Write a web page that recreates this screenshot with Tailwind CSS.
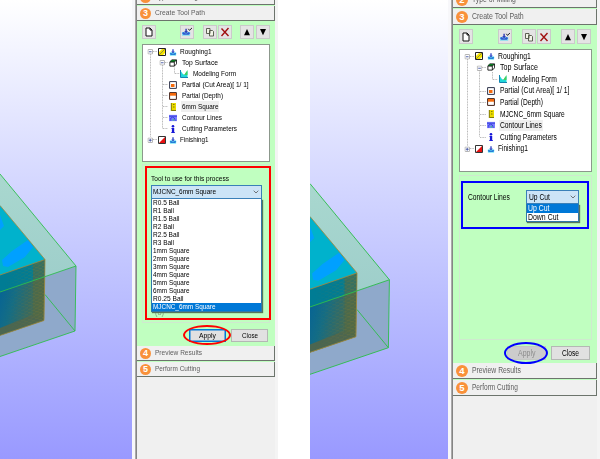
<!DOCTYPE html>
<html lang="en">
<head>
<meta charset="utf-8">
<title>Create Tool Path</title>
<script src="https://cdn.jsdelivr.net/npm/@tailwindcss/browser@4"></script>
</head>
<body class="w-[600px] h-[459px] overflow-hidden bg-white text-black font-['Liberation_Sans',Arial,sans-serif] text-[8px] leading-none [&_[data-w]]:inline-block [&_[data-w]]:shrink-0 [&_[data-w]]:whitespace-pre [&_[data-w]]:origin-left">

<!-- shared icons -->
<svg width="0" height="0" class="absolute">
  <defs>
    <linearGradient id="side" x1="0" y1="0" x2="1" y2="0.5"><stop offset="0" stop-color="#005f9c"/><stop offset="0.45" stop-color="#146d85"/><stop offset="1" stop-color="#4f6848"/></linearGradient>
    <linearGradient id="glass" x1="0" y1="0" x2="0" y2="1"><stop offset="0" stop-color="#a9d8cf"/><stop offset="1" stop-color="#9dcdca"/></linearGradient>
    <pattern id="grain" width="7" height="3.4" patternUnits="userSpaceOnUse" patternTransform="skewY(-8)"><path d="M0 .7h4M3.500 2.400h3.500" stroke="#8a7a2c" stroke-width=".6" opacity=".7"/></pattern>
    <linearGradient id="fade"><stop offset=".1" stop-color="#000"/><stop offset="1" stop-color="#fff"/></linearGradient>
    <mask id="m" maskUnits="userSpaceOnUse" x="0" y="255" width="46" height="85"><rect x="0" y="255" width="46" height="85" fill="url(#fade)"/></mask>
    <g id="model">
      <path d="M0 174 76 266 0 292z" fill="url(#glass)"/>
      <path d="M0 292 76 266 75 331 0 356.500z" fill="#8fa9cb"/>
      <path d="M0 205.500 45 259.500 0 275z" fill="#00b2cc"/>
      <path d="M0 215 4 226 0 230zM2 260 12 251 28 240 33 247 25 257 8 267 3 266z" fill="#00a0ff"/>
      <path d="M0 275 45 259.500 44 320.500 0 335.500z" fill="url(#side)"/>
      <path d="M0 275 45 259.500V277L0 292z" fill="#007c94"/>
      <path d="M0 328 30 316 44 312V320.500L0 335.500z" fill="#4b6650"/>
      <path d="M33 264 45 259.500 44 320.500 33 317z" fill="#526a45" opacity=".65"/>
      <path d="M0 275 45 259.500 44 320.500 0 333z" fill="url(#grain)" mask="url(#m)"/>
      <path d="M0 205.500 45 259.500 0 275M45 259.500 44 320.500 0 335.500" fill="none" stroke="#a28a3d" stroke-width=".8"/>
      <path d="M0 174 76 266 0 292M76 266 75 331 0 356.500M45 294.500 75 331" fill="none" stroke="#2fbd4d" stroke-width=".9"/>
    </g>
    <symbol id="anchor" viewBox="0 0 9 9"><path d="M1 5h7v3.500H1z" fill="#4fdcf0"/><path d="M3.700 1.500h1.600v2.500h1.200L4.500 6.500 2.500 4h1.200z" fill="#3a50c8"/><path d="M.8 6 2.500 5.500l2 1.500 2-1.500L8.200 6 7 7.800H2z" fill="#2878d8"/></symbol>
    <symbol id="rough" viewBox="0 0 8 8"><path d="M.5.500h7v7h-7z" fill="#fff" stroke="#222"/><path d="M1 7V4l3-3h3L7 5 5 7z" fill="#f5e400"/><path d="M1 7 7 1" stroke="#775" stroke-width=".8"/></symbol>
    <symbol id="finish" viewBox="0 0 8 8"><path d="M.5.500h7v7h-7z" fill="#fff" stroke="#333"/><path d="M7 1v6H1z" fill="#e81010"/></symbol>
    <symbol id="cube" viewBox="0 0 9 8"><path d="M3 .500h5.500V5L6 7.500H1V3z" fill="#fff" stroke="#111"/><path d="M1 3 3 .500h5.500L6 3z" fill="#087a20"/><path d="M1 3h5v4.500M6 3 8.500.500" fill="none" stroke="#111"/></symbol>
    <symbol id="form" viewBox="0 0 8 8"><path d="M0 0 3 4 4.500 5 7.500 1V7.500H1z" fill="#20d8d8"/><path d="M4 5 7.500 0V5z" fill="#40d060"/><path d="M2.500 3.500 5 1v3z" fill="#fff"/><path d="M.5 0v7.500H8" stroke="#1585b0" fill="none"/></symbol>
    <symbol id="area" viewBox="0 0 8 8"><path d="M.6.600h6.800v6.800H.6z" fill="#fff" stroke="#30344c"/><path d="M2 3h3.500v3H2z" fill="#f56a0c"/></symbol>
    <symbol id="depth" viewBox="0 0 8 8"><path d="M.6.600h6.800v6.800H.6z" fill="#fff" stroke="#442218"/><path d="M1 1h6v2.700H1z" fill="#f56a0c"/></symbol>
    <symbol id="tool" viewBox="0 0 8 8"><path d="M2 0h5v8H2z" fill="#eadb00"/><path d="M2.300 0v8M4 1.500h1.500M4 4h1.500M3 7.500h4" stroke="#66610a" stroke-width=".8"/></symbol>
    <symbol id="contour" viewBox="0 0 9 8"><path d="M0 .500h9v7H0z" fill="#7a7cff"/><path d="M2 7V4l2-1 2 1 1 3M0 2h9" stroke="#333cd8" fill="none"/><path d="M4 5h2v2H4z" fill="#48b4a0"/></symbol>
    <symbol id="info" viewBox="0 0 8 8"><circle cx="4" cy="1.300" r="1.300" fill="#1717d8"/><path d="M2.500 3h2.700v4h.6v1H2.300V7h.6V4h-.4z" fill="#1717d8"/></symbol>
    <symbol id="page" viewBox="0 0 10 10"><path d="M2 1h4l2 2v6H2zM6 1v2h2" fill="#fff" stroke="#111"/></symbol>
    <symbol id="load" viewBox="0 0 11 10"><path d="M0 5h9v4H0z" fill="#72def2"/><path d="M3.700 1.500h1.600v2.500h1.200L4.500 7 2.500 4h1.200z" fill="#3340b8"/><path d="M0 6 2 5l2.500 2L7 5l2 1-1.500 2h-6z" fill="#3558d0"/><path d="m7 1.500 1.300 1.700L11 .500" stroke="#111" fill="none"/></symbol>
    <symbol id="copy" viewBox="0 0 10 10"><path d="M1.500 1.500h3.500v5H1.500zM4.500 3.500h3l1 1v4.500h-4z" fill="#f2f5e8" stroke="#4e5244" stroke-width=".9"/></symbol>
    <symbol id="cross" viewBox="0 0 10 10"><path d="m1.500 1.500 7 7.500M8.500 1 1.500 9" stroke="#a01010" stroke-width="1.400"/></symbol>
    <symbol id="up" viewBox="0 0 10 10"><path d="M5 2 8 8.300H2z"/></symbol>
    <symbol id="down" viewBox="0 0 10 10"><path d="M5 8.300 8 2H2z"/></symbol>
    <symbol id="minus" viewBox="0 0 5 5"><rect x=".4" y=".4" width="4.200" height="4.200" rx=".6" fill="#fff" stroke="#a5a5a5" stroke-width=".8"/><path d="M1.300 2.500h2.400" stroke="#3c50a0" stroke-width=".8"/></symbol>
    <symbol id="plus" viewBox="0 0 5 5"><rect x=".4" y=".4" width="4.200" height="4.200" rx=".6" fill="#fff" stroke="#a5a5a5" stroke-width=".8"/><path d="M1.200 2.500h2.600M2.500 1.200v2.600" stroke="#3c50a0" stroke-width=".8"/></symbol>
  </defs>
</svg>

<div class="flex h-[459px]">

  <!-- left window -->
  <div class="w-[132px] shrink-0 bg-linear-to-b from-white to-[#9999ff]">
    <svg width="132" height="459" viewBox="0 0 132 459" class="block"><use href="#model"/></svg>
  </div>
  <div class="w-[4px] shrink-0 bg-[#f7f7fa] border-r border-[#aaaaaa]"></div>
  <div class="w-[1px] shrink-0 bg-[#858585]"></div>
  <div data-size="8" class="w-[138px] shrink-0 flex flex-col bg-[#f0f0f0]">
    <div class="bg-[#c0ffc0] h-[377px] shrink-0 flex flex-col [&>header]:h-[15px] [&>header]:shrink-0 [&>header]:flex [&>header]:items-center [&>header]:gap-[4px] [&>header]:pl-[3px] [&>header]:bg-[#f0f0f0] [&>header]:border-b [&>header]:border-r [&>header]:border-[#6c746c] [&>header]:text-[#5e5e5e]">
      <header class="-mt-[10px]"><div class="size-[11px] shrink-0 grid place-items-center rounded-full bg-[#f9913a] text-white font-bold text-[9px]">2</div><span data-w="43">Type of Milling</span></header>
      <header class="mt-[1px]"><div class="size-[11px] shrink-0 grid place-items-center rounded-full bg-[#f9913a] text-white font-bold text-[9px]">3</div><span data-w="50">Create Tool Path</span></header>

      <div class="flex pt-[4px] pl-[5px] h-[23px] shrink-0 [&>button]:w-[14px] [&>button]:h-[14px] [&>button]:shrink-0 [&>button]:bg-[#e4e4e4] [&>button]:border [&>button]:border-[#cacaca] [&>button]:grid [&>button]:place-items-center [&_svg]:size-[10px]">
        <button><svg><use href="#page"/></svg></button>
        <button class="ml-[24px]"><svg><use href="#load"/></svg></button>
        <button class="ml-[9px]"><svg><use href="#copy"/></svg></button>
        <button class="ml-[1px]"><svg><use href="#cross"/></svg></button>
        <button class="ml-[8px]"><svg><use href="#up"/></svg></button>
        <button class="ml-[2px]"><svg><use href="#down"/></svg></button>
      </div>

      <div class="relative ml-[5px] w-[128px] h-[118px] shrink-0 bg-white border border-[#8c988c] pt-[1px] [&>div]:h-[11.07px] [&>div]:flex [&>div]:items-center [&>div>svg]:size-[8px] [&>div>svg]:shrink-0">
        <svg class="absolute left-0 top-0" width="60" height="116" viewBox="143 45 60 116"><path d="M150.500 54v83M162.500 65v64M153 51.500h4M165 62.500h3M174.500 66v7.500h5M163 84.500h5M163 95.500h5M163 106.500h5M163 117.500h5M163 128.500h5M153 139.500h4" stroke="#a8a8a8" stroke-width=".8" stroke-dasharray="1 .6" fill="none"/><use href="#minus" x="147.500" y="49" width="5.500" height="5.500"/><use href="#minus" x="159.500" y="60" width="5.500" height="5.500"/><use href="#plus" x="147.500" y="137.500" width="5.500" height="5.500"/></svg>
        <div class="pl-[15px]"><svg><use href="#rough"/></svg><svg class="ml-[3px] mr-[3px]"><use href="#anchor"/></svg><span data-w="31.5">Roughing1</span></div>
        <div class="pl-[26px]"><svg class="mr-[5px]"><use href="#cube"/></svg><span data-w="36">Top Surface</span></div>
        <div class="pl-[37px]"><svg class="mr-[5px]"><use href="#form"/></svg><span data-w="43">Modeling Form</span></div>
        <div class="pl-[26px]"><svg class="mr-[5px]"><use href="#area"/></svg><span data-w="67">Partial (Cut Area)[ 1/ 1]</span></div>
        <div class="pl-[26px]"><svg class="mr-[5px]"><use href="#depth"/></svg><span data-w="41">Partial (Depth)</span></div>
        <div class="pl-[26px]"><svg class="mr-[4px]"><use href="#tool"/></svg><div class="bg-[#efefef] h-[11px] w-[38px] pl-[1px] flex items-center"><span data-w="36.5">6mm Square</span></div></div>
        <div class="pl-[26px]"><svg class="mr-[5px]"><use href="#contour"/></svg><span data-w="40">Contour Lines</span></div>
        <div class="pl-[26px]"><svg class="mr-[5px]"><use href="#info"/></svg><span data-w="55">Cutting Parameters</span></div>
        <div class="pl-[15px]"><svg><use href="#finish"/></svg><svg class="ml-[3px] mr-[3px]"><use href="#anchor"/></svg><span data-w="28.5">Finishing1</span></div>
      </div>

      <div class="relative mt-[2px] ml-[5px] w-[128px] h-[159px] shrink-0 border border-[#cfe9cf]">
        <div class="absolute left-[2px] top-[1px] w-[126px] h-[154px] border-2 border-[#ff0000] px-[4px] pt-[4px]">
          <div class="h-[13px] flex items-center"><span data-w="78">Tool to use for this process</span></div>
          <div class="h-[14px] w-[111px] bg-[#cce4f7] border border-[#3a80b8] flex items-center pl-[1px] pr-[2px] justify-between"><span data-w="63">MJCNC_6mm Square</span><svg class="shrink-0" width="6" height="4" viewBox="0 0 6 4"><path d="m.7.700 2.300 2.300L5.300.700" stroke="#555" stroke-width=".8" fill="none"/></svg></div>
          <div class="relative z-10 w-[111px] h-[113px] bg-white border border-[#3178a8] border-t-0 shadow-[1px_1px_1px_#55775a] [&>div]:h-[8px] [&>div]:pl-[1px] [&>div]:flex [&>div]:items-center">
            <div><span data-w="26.5">R0.5 Ball</span></div>
            <div><span data-w="21">R1 Ball</span></div>
            <div><span data-w="26.5">R1.5 Ball</span></div>
            <div><span data-w="21">R2 Ball</span></div>
            <div><span data-w="26.5">R2.5 Ball</span></div>
            <div><span data-w="21">R3 Ball</span></div>
            <div><span data-w="36.5">1mm Square</span></div>
            <div><span data-w="36.5">2mm Square</span></div>
            <div><span data-w="36.5">3mm Square</span></div>
            <div><span data-w="36.5">4mm Square</span></div>
            <div><span data-w="36.5">5mm Square</span></div>
            <div><span data-w="36.5">6mm Square</span></div>
            <div><span data-w="30.5">R0.25 Ball</span></div>
            <div class="bg-[#0078d7] text-white"><span data-w="62.5">MJCNC_6mm Square</span></div>
          </div>
          <div class="-mt-[3px] ml-[4px] text-[#7c9a7c]"><span data-w="9">(o)</span></div>
        </div>
      </div>

      <div class="relative mt-[6px] pl-[52px] h-[17px] shrink-0 flex gap-[5px] [&>button]:w-[37px] [&>button]:h-[13px] [&>button]:flex [&>button]:items-center [&>button]:bg-[#e1e1e1] [&>button]:border">
        <button class="border-[#0078d7] shadow-[inset_0_0_0_0.5px_#0078d7] pl-[9px]"><span data-w="17">Apply</span></button>
        <button class="border-[#b4b8b4] pl-[10px]"><span data-w="16">Close</span></button>
        <div class="absolute left-[46px] -top-[4px] w-[48px] h-[20px] rounded-[50%] border-2 border-[#ff0000]"></div>
      </div>

      <header><div class="size-[11px] shrink-0 grid place-items-center rounded-full bg-[#f9913a] text-white font-bold text-[9px]">4</div><span data-w="47">Preview Results</span></header>
      <header class="mt-[1px]"><div class="size-[11px] shrink-0 grid place-items-center rounded-full bg-[#f9913a] text-white font-bold text-[9px]">5</div><span data-w="45">Perform Cutting</span></header>
    </div>
  </div>
  <div class="w-[3px] shrink-0 bg-[#f4f4f4]"></div>

  <div class="w-[32px] shrink-0 bg-white"></div>

  <!-- right window -->
  <div class="w-[138px] shrink-0 bg-linear-to-b from-white to-[#9999ff]">
    <svg width="138" height="459" viewBox="0 0 138 459" class="block"><use href="#model" transform="translate(0 1.800) scale(1.045)"/></svg>
  </div>
  <div class="w-[4px] shrink-0 bg-[#f7f7fa] border-r border-[#aaaaaa]"></div>
  <div class="w-[1px] shrink-0 bg-[#858585]"></div>
  <div data-size="8.4" class="w-[144px] shrink-0 flex flex-col bg-[#f0f0f0] text-[8.4px]">
    <div class="bg-[#c0ffc0] h-[395px] shrink-0 flex flex-col [&>header]:h-[16px] [&>header]:shrink-0 [&>header]:flex [&>header]:items-center [&>header]:gap-[4px] [&>header]:pl-[3px] [&>header]:bg-[#f0f0f0] [&>header]:border-b [&>header]:border-r [&>header]:border-[#6c746c] [&>header]:text-[#5e5e5e]">
      <header class="-mt-[8px]"><div class="size-[12px] shrink-0 grid place-items-center rounded-full bg-[#f9913a] text-white font-bold text-[9.5px]">2</div><span data-w="44">Type of Milling</span></header>
      <header class="mt-[1px]"><div class="size-[12px] shrink-0 grid place-items-center rounded-full bg-[#f9913a] text-white font-bold text-[9.5px]">3</div><span data-w="52">Create Tool Path</span></header>

      <div class="flex pt-[4px] pl-[6px] h-[24px] shrink-0 [&>button]:w-[14px] [&>button]:h-[15px] [&>button]:shrink-0 [&>button]:bg-[#e4e4e4] [&>button]:border [&>button]:border-[#cacaca] [&>button]:grid [&>button]:place-items-center [&_svg]:size-[10px]">
        <button><svg><use href="#page"/></svg></button>
        <button class="ml-[25px]"><svg><use href="#load"/></svg></button>
        <button class="ml-[10px]"><svg><use href="#copy"/></svg></button>
        <button class="ml-[1px]"><svg><use href="#cross"/></svg></button>
        <button class="ml-[10px]"><svg><use href="#up"/></svg></button>
        <button class="ml-[2px]"><svg><use href="#down"/></svg></button>
      </div>

      <div class="relative ml-[6px] w-[133px] h-[123px] shrink-0 bg-white border border-[#8c988c] [&>div]:h-[11.6px] [&>div]:flex [&>div]:items-center [&>div>svg]:size-[8px] [&>div>svg]:shrink-0">
        <svg class="absolute left-0 top-0" width="60" height="121" viewBox="460 50 60 121"><path d="M467.500 59v87M479.500 70v67M470 56.500h4M482 67.500h4M492.500 72v7.500h5M480 91.500h6M480 102.500h6M480 114.500h6M480 125.500h6M480 137.500h6M470 148.500h4" stroke="#a8a8a8" stroke-width=".8" stroke-dasharray="1 .6" fill="none"/><use href="#minus" x="464.500" y="54" width="5.500" height="5.500"/><use href="#minus" x="476.800" y="65.500" width="5.500" height="5.500"/><use href="#plus" x="464.500" y="146.500" width="5.500" height="5.500"/></svg>
        <div class="pl-[15px]"><svg><use href="#rough"/></svg><svg class="ml-[4px] mr-[3px]"><use href="#anchor"/></svg><span data-w="33">Roughing1</span></div>
        <div class="pl-[27px]"><svg class="mr-[5px]"><use href="#cube"/></svg><span data-w="38">Top Surface</span></div>
        <div class="pl-[39px]"><svg class="mr-[5px]"><use href="#form"/></svg><span data-w="45">Modeling Form</span></div>
        <div class="pl-[27px]"><svg class="mr-[5px]"><use href="#area"/></svg><span data-w="70">Partial (Cut Area)[ 1/ 1]</span></div>
        <div class="pl-[27px]"><svg class="mr-[5px]"><use href="#depth"/></svg><span data-w="43">Partial (Depth)</span></div>
        <div class="pl-[27px]"><svg class="mr-[5px]"><use href="#tool"/></svg><span data-w="65">MJCNC_6mm Square</span></div>
        <div class="pl-[27px]"><svg class="mr-[4px]"><use href="#contour"/></svg><div class="bg-[#efefef] h-[11px] w-[44px] pl-[1px] flex items-center"><span data-w="42">Contour Lines</span></div></div>
        <div class="pl-[27px]"><svg class="mr-[5px]"><use href="#info"/></svg><span data-w="57">Cutting Parameters</span></div>
        <div class="pl-[15px]"><svg><use href="#finish"/></svg><svg class="ml-[4px] mr-[3px]"><use href="#anchor"/></svg><span data-w="30">Finishing1</span></div>
      </div>

      <div class="relative mt-[3px] ml-[6px] w-[133px] h-[165px] shrink-0 border border-[#cfe9cf]">
        <div class="absolute left-[1px] top-[5px] w-[128px] h-[48px] border-2 border-[#0000ff] pl-[5px] pt-[7px] flex">
          <div class="h-[15px] w-[58px] shrink-0 flex items-center"><span data-w="42">Contour Lines</span></div>
          <div class="w-[53px]">
            <div class="h-[14px] bg-[#cce4f7] border border-[#3a80b8] flex items-center pl-[2px] pr-[2px] justify-between"><span data-w="21">Up Cut</span><svg class="shrink-0" width="6" height="4" viewBox="0 0 6 4"><path d="m.7.700 2.300 2.300L5.300.700" stroke="#555" stroke-width=".8" fill="none"/></svg></div>
            <div class="h-[18px] bg-white border border-t-0 border-[#3178a8] shadow-[1px_1px_1px_#55775a] [&>div]:h-[8.5px] [&>div]:pl-[1px] [&>div]:flex [&>div]:items-center">
              <div class="bg-[#0078d7] text-white"><span data-w="21.5">Up Cut</span></div>
              <div><span data-w="30.5">Down Cut</span></div>
            </div>
          </div>
        </div>
      </div>

      <div class="relative mt-[6px] pl-[54px] h-[17px] shrink-0 flex gap-[5px] [&>button]:w-[39px] [&>button]:h-[14px] [&>button]:flex [&>button]:items-center [&>button]:border">
        <button class="border-[#c4c8c4] bg-[#cccccc] text-[#8c8c8c] pl-[10px]"><span data-w="17.5">Apply</span></button>
        <button class="border-[#b4b8b4] bg-[#e1e1e1] pl-[10px]"><span data-w="17">Close</span></button>
        <div class="absolute left-[51px] -top-[4px] w-[44px] h-[22px] rounded-[50%] border-2 border-[#0000ff]"></div>
      </div>

      <header><div class="size-[12px] shrink-0 grid place-items-center rounded-full bg-[#f9913a] text-white font-bold text-[9.5px]">4</div><span data-w="49">Preview Results</span></header>
      <header class="mt-[1px]"><div class="size-[12px] shrink-0 grid place-items-center rounded-full bg-[#f9913a] text-white font-bold text-[9.5px]">5</div><span data-w="46">Perform Cutting</span></header>
    </div>
  </div>
  <div class="w-[3px] shrink-0 bg-[#f4f4f4]"></div>
</div>

<script>
  var ctx = document.createElement('canvas').getContext('2d');
  ctx.font = '100px "Liberation Sans", Arial, sans-serif';
  document.querySelectorAll('[data-w]').forEach(function (el) {
    var size = parseFloat(el.closest('[data-size]').dataset.size);
    var natural = ctx.measureText(el.textContent).width * size / 100;
    var wanted = parseFloat(el.dataset.w);
    el.style.transform = 'scaleX(' + (wanted / natural) + ')';
    el.style.marginRight = (wanted - natural) + 'px';
  });
</script>
</body>
</html>
